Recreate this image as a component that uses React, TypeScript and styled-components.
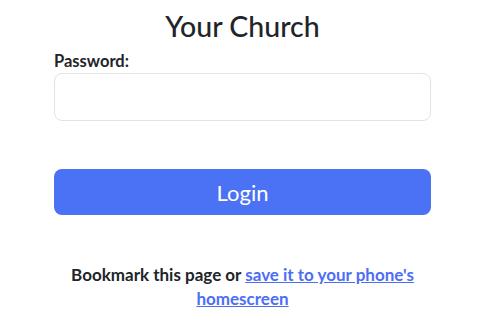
import React from "react";
import styled, { createGlobalStyle } from "styled-components";

const Global = createGlobalStyle`
  html, body { margin: 0; padding: 0; background: #fff; }
  body { font-family: Lato, "Noto Sans", sans-serif; color: #212529; }
  * { box-sizing: border-box; }
`;

const Page = styled.div`
  width: 486px;
  padding: 6px 55px 0 54px;
  display: flex;
  flex-direction: column;
`;

const Title = styled.h1`
  margin: 0;
  text-align: center;
  font-size: 28.5px;
  font-weight: 500;
  line-height: 40px;
  color: #212529;
`;

const Label = styled.label`
  display: block;
  margin-top: 4px;
  font-size: 16.5px;
  font-weight: 700;
  line-height: 22px;
`;

const Input = styled.input`
  display: block;
  width: 100%;
  height: 48px;
  margin-top: 1px;
  border: 1px solid #e3e3e3;
  border-radius: 8px;
  font-size: 16px;
  padding: 0 12px;
  outline: none;
`;

const Button = styled.button`
  margin-top: 48px;
  width: 100%;
  height: 46px;
  border: none;
  border-radius: 8px;
  background: #4b72f5;
  color: #fff;
  font-family: inherit;
  font-size: 22px;
  font-weight: 400;
  cursor: pointer;
`;

const Footer = styled.p`
  margin: 48px 0 0;
  text-align: center;
  font-size: 17px;
  font-weight: 700;
  line-height: 24px;
  padding: 0 10px;
`;

const Link = styled.a`
  color: #4b6ef5;
  text-decoration: underline;
`;

export default function App() {
  return (
    <>
      <Global />
      <Page>
        <Title>Your Church</Title>
        <Label htmlFor="pw">Password:</Label>
        <Input id="pw" type="password" />
        <Button>Login</Button>
        <Footer>
          Bookmark this page or <Link href="#">save it to your phone's homescreen</Link>
        </Footer>
      </Page>
    </>
  );
}
